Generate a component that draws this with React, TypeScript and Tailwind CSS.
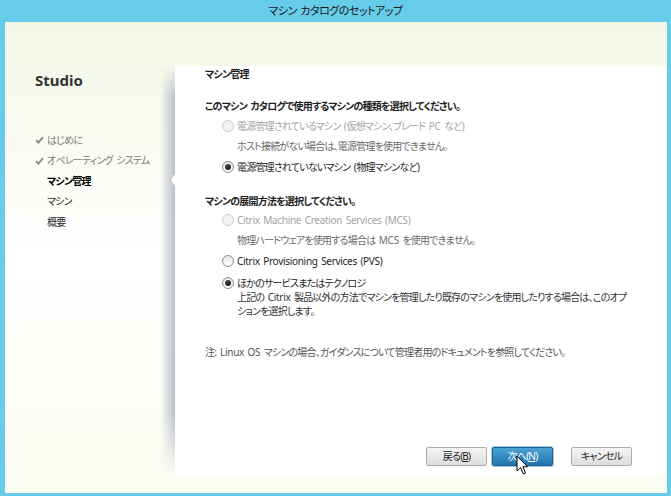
import React from 'react';

const steps = [
  { label: 'はじめに', done: true },
  { label: 'オペレーティング システム', done: true },
  { label: 'マシン管理', current: true },
  { label: 'マシン' },
  { label: '概要' },
];

// latin words get looser tracking than kana/kanji; spaces get a fixed width
const T: React.FC<{ s: string }> = ({ s }) => (
  <>
    {s.split(/( |[!-~]+)/).map((part, i) => {
      if (i % 2 === 0) return part;
      if (part === ' ')
        return (
          <span key={i} className="inline-block w-[3.5px]">
            {' '}
          </span>
        );
      return (
        <span key={i} className="tracking-[-0.3px]">
          {part}
        </span>
      );
    })}
  </>
);

const Radio: React.FC<{ checked?: boolean; disabled?: boolean }> = ({ checked, disabled }) => (
  <span
    className={`flex h-[12px] w-[12px] shrink-0 items-center justify-center rounded-full border ${
      disabled ? 'border-[#cdcdcd] bg-[#f3f3f3]' : 'border-[#8e8f8f] bg-gradient-to-b from-[#e6e6e6] to-[#fdfdfd]'
    }`}
  >
    {checked && <span className="h-[6px] w-[6px] rounded-full bg-gradient-to-br from-[#555] to-[#111]" />}
  </span>
);

const Option: React.FC<{ label: string; checked?: boolean; disabled?: boolean; className?: string }> = ({
  label,
  checked,
  disabled,
  className = '',
}) => (
  <div className={`flex h-[20px] items-center gap-[3px] pl-[17px] ${className}`}>
    <Radio checked={checked} disabled={disabled} />
    <span className={disabled ? 'text-[#a3a3a3]' : 'text-[#1e1e1e]'}>
      <T s={label} />
    </span>
  </div>
);

const Button: React.FC<{ children: React.ReactNode; primary?: boolean }> = ({ children, primary }) => (
  <button
    className={`flex h-[19px] w-[61px] items-center justify-center rounded-[2px] border text-[10px] ${
      primary
        ? 'border-[#1f5f8e] bg-gradient-to-b from-[#4aa3d6] to-[#2674ae] text-white shadow-[0_0_0_1px_#9fd0ee]'
        : 'border-[#acacac] bg-gradient-to-b from-[#f4f4f4] to-[#dddddd] text-[#1e1e1e]'
    }`}
  >
    {children}
  </button>
);

export default function App() {
  return (
    <div className="flex h-[496px] w-[671px] flex-col whitespace-nowrap bg-[#67cbea] font-['Noto_Sans','Noto_Sans_CJK_JP',sans-serif] text-[10px] tracking-[-0.8px] [font-feature-settings:'palt']">
      <div className="flex h-[22px] items-center justify-center text-[11px] tracking-[-0.5px] text-[#1a1a1a]">
        <T s="マシン カタログのセットアップ" />
      </div>

      <div className="mb-[3px] ml-[5px] mr-[4px] flex flex-1 bg-gradient-to-b from-[#f3f8e6] via-white to-[#fafdf2]">
        {/* sidebar */}
        <div className="flex w-[155px] flex-col pl-[30px] pt-[46px]">
          <div className="h-[24px] text-[15px] font-bold leading-[24px] tracking-normal text-[#333]">Studio</div>
          <div className="mt-[38px] flex flex-col">
            {steps.map((s) => (
              <div key={s.label} className="flex h-[20.5px] items-center">
                <span className="w-[12px]">
                  {s.done && (
                    <svg width="9" height="8" viewBox="0 0 9 8">
                      <path d="M1 4.2 L3.4 6.6 L8 1.2" fill="none" stroke="#8a8a8a" strokeWidth="1.8" />
                    </svg>
                  )}
                </span>
                <span className={s.current ? 'font-bold text-black' : s.done ? 'text-[#7c7c7c]' : 'text-[#2a2a2a]'}>
                  <T s={s.label} />
                </span>
              </div>
            ))}
          </div>
        </div>

        {/* panel shadow */}
        <div className="mb-[18px] mt-[44px] w-[15px] bg-gradient-to-r from-transparent to-[#bcc0ca] [mask-image:linear-gradient(to_bottom,transparent,black_30px,black_calc(100%-60px),transparent)]" />

        {/* main panel */}
        <div className="relative mb-[18px] mt-[44px] flex flex-1 flex-col bg-white pl-[30px] pr-[10px] text-[#1e1e1e]">
          <div className="absolute left-[-4px] top-[108px] h-0 w-0 border-y-[6px] border-r-[4px] border-y-transparent border-r-white" />

          <div className="-mt-[2px] flex h-[20px] items-center font-bold">マシン管理</div>

          <div className="mt-[12px] flex h-[20px] items-center font-bold">
            <T s="このマシン カタログで使用するマシンの種類を選択してください。" />
          </div>
          <Option label="電源管理されているマシン (仮想マシン、ブレード PC など)" disabled />
          <div className="flex h-[20px] items-center pl-[32px] text-[#6a6a6a]">ホスト接続がない場合は、電源管理を使用できません。</div>
          <Option label="電源管理されていないマシン (物理マシンなど)" checked className="mt-[1px]" />

          <div className="mt-[14px] flex h-[20px] items-center font-bold">マシンの展開方法を選択してください。</div>
          <Option label="Citrix Machine Creation Services (MCS)" disabled className="-mt-[1px]" />
          <div className="flex h-[20px] items-center pl-[32px] text-[#6a6a6a]">
            <T s="物理ハードウェアを使用する場合は MCS を使用できません。" />
          </div>
          <Option label="Citrix Provisioning Services (PVS)" className="mt-[1px]" />

          <div className="mt-[5px] flex flex-col leading-[14px]">
            <div className="flex h-[14px] items-center gap-[3px] pl-[17px]">
              <Radio checked />
              <span>ほかのサービスまたはテクノロジ</span>
            </div>
            <div className="pl-[32px] text-[#333]">
              <T s="上記の Citrix 製品以外の方法でマシンを管理したり既存のマシンを使用したりする場合は、このオプ" />
            </div>
            <div className="pl-[32px] text-[#333]">ションを選択します。</div>
          </div>

          <div className="mt-[24px] flex h-[20px] items-center text-[#555]">
            <T s="注: Linux OS マシンの場合、ガイダンスについて管理者用のドキュメントを参照してください。" />
          </div>

          <div className="mt-auto mb-[9px] flex justify-end gap-[5px] pr-[25px]">
            <Button>
              戻る(<span className="underline">B</span>)
            </Button>
            <div className="relative">
              <Button primary>
                次へ(<span className="underline">N</span>)
              </Button>
              <svg className="absolute left-[24px] top-[8px]" width="13" height="21" viewBox="0 0 13 21">
                <path d="M1 1 L1 16 L4.6 12.6 L7.4 19 L9.6 18 L6.9 11.8 L11.6 11.8 Z" fill="white" stroke="black" strokeWidth="1" strokeLinejoin="round" />
              </svg>
            </div>
            <div className="ml-[13px]">
              <Button>キャンセル</Button>
            </div>
          </div>
        </div>
      </div>
    </div>
  );
}
